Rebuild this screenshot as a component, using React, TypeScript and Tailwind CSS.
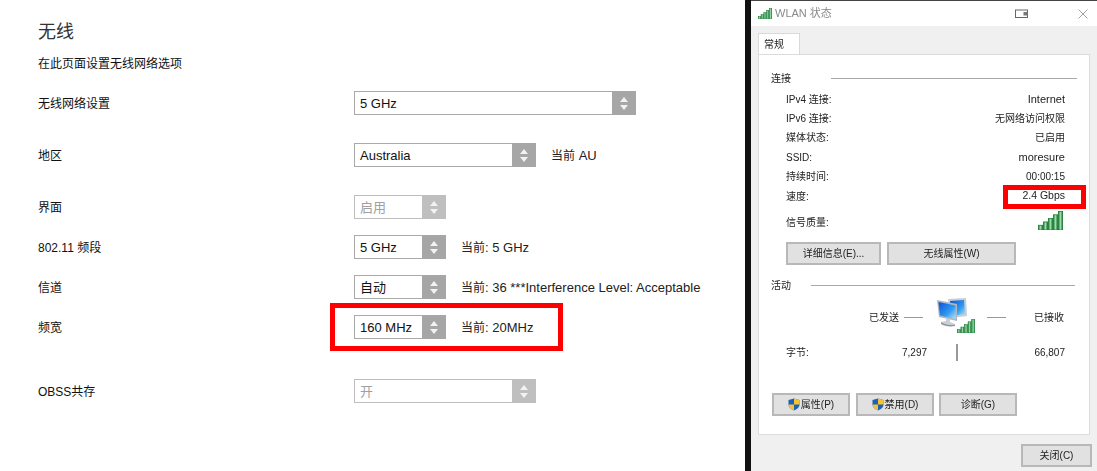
import React from 'react';

const font = { fontFamily: '"Liberation Sans", "Noto Sans CJK SC", sans-serif' };

const SelectBox = ({ value, width, disabled }: { value: string; width: string; disabled?: boolean }) => (
  <div className={`flex h-6 shrink-0 border bg-white ${width} ${disabled ? 'border-[#bdbdbd] text-[#a0a0a0]' : 'border-[#a9a9a9] text-[#111]'}`}>
    <div className="flex flex-1 items-center pl-[5px] pt-px text-[13px]">{value}</div>
    <div className={`-my-px -mr-px flex w-6 flex-col items-center justify-center gap-[3px] ${disabled ? 'bg-[#bfbfbf]' : 'bg-[#a6a6a6]'}`}>
      <div className="h-0 w-0 border-x-[4px] border-b-[5px] border-x-transparent border-b-[#f2f2f2]" />
      <div className="h-0 w-0 border-x-[4px] border-t-[5px] border-x-transparent border-t-[#f2f2f2]" />
    </div>
  </div>
);

const Row = ({ label, className, children }: { label: string; className: string; children: React.ReactNode }) => (
  <div className={`flex h-6 items-center ${className}`}>
    <div className="w-[316px] shrink-0 pt-px text-xs text-[#111]">{label}</div>
    {children}
  </div>
);

const Current = ({ cjk, rest, className }: { cjk: string; rest: string; className: string }) => (
  <div className={`whitespace-nowrap text-[#222] ${className}`}>
    <span className="text-xs">{cjk}</span>
    <span className="text-[13px]">{rest}</span>
  </div>
);

const Signal = ({ className }: { className: string }) => (
  <svg viewBox="0 0 24 20" preserveAspectRatio="none" className={className}>
    <defs>
      <linearGradient id="sig" x1="0" x2="1" y1="0" y2="0">
        <stop offset="0" stopColor="#1f8a3c" />
        <stop offset="0.5" stopColor="#9bdcab" />
        <stop offset="1" stopColor="#1f7a35" />
      </linearGradient>
    </defs>
    <rect x="0.4" y="15" width="4" height="5" fill="url(#sig)" stroke="#1d7a36" strokeWidth="0.8" />
    <rect x="5.2" y="11.5" width="4" height="8.5" fill="url(#sig)" stroke="#1d7a36" strokeWidth="0.8" />
    <rect x="10" y="8" width="4" height="12" fill="url(#sig)" stroke="#1d7a36" strokeWidth="0.8" />
    <rect x="14.8" y="4" width="4" height="16" fill="url(#sig)" stroke="#1d7a36" strokeWidth="0.8" />
    <rect x="19.6" y="0.5" width="4" height="19.5" fill="url(#sig)" stroke="#1d7a36" strokeWidth="0.8" />
  </svg>
);

const Shield = () => (
  <svg viewBox="0 0 12 13" className="h-[13px] w-3 shrink-0">
    <path d="M6 0.5 L11.5 2 V6.5 C11.5 9.5 8.5 11.5 6 12.5 C3.5 11.5 0.5 9.5 0.5 6.5 V2 Z" fill="#1f5fb8" />
    <path d="M6 0.5 L11.5 2 V6.5 H6 Z" fill="#f4c430" />
    <path d="M6 6.5 H0.5 C0.5 9.5 3.5 11.5 6 12.5 Z" fill="#f4c430" />
  </svg>
);

const Computers = () => (
  <svg viewBox="0 0 40 38" className="h-[38px] w-10">
    <defs>
      <linearGradient id="scr" x1="0" x2="1" y1="0" y2="1">
        <stop offset="0" stopColor="#0a50d8" />
        <stop offset="0.6" stopColor="#2f9bf0" />
        <stop offset="1" stopColor="#b8e2fb" />
      </linearGradient>
    </defs>
    <path d="M12 1 L30 0 L31 18 L15 20 Z" fill="#c6cdd4" />
    <path d="M14 3 L28 2 L29 16 L16 18 Z" fill="url(#scr)" />
    <path d="M1 2 L21 6 L21 23 L3 19 Z" fill="#aeb7bf" />
    <path d="M2.5 4 L19.5 7.5 L19.5 21 L4 17.5 Z" fill="url(#scr)" />
    <path d="M10 20 L14 21 L14 24 L19 26 C19 28 9 27 5 24 L10 23 Z" fill="#c9cfd4" />
    <path d="M5 24 C9 27 19 28 19 26 L19 28 C14 29 8 28 5 26 Z" fill="#8f979e" />
  </svg>
);

const WinButton = ({ children, className }: { children: React.ReactNode; className: string }) => (
  <div className={`flex h-[23px] shrink-0 items-center justify-center border-2 border-[#b8b8b8] bg-[#e1e1e1] text-[10px] text-[#222] ${className}`}>
    {children}
  </div>
);

const infoRows = [
  { label: 'IPv4 连接:', value: 'Internet', h: 'h-[19px]', size: 'text-[11px]' },
  { label: 'IPv6 连接:', value: '无网络访问权限', h: 'h-[19px]', size: '' },
  { label: '媒体状态:', value: '已启用', h: 'h-[19px]', size: '' },
  { label: 'SSID:', value: 'moresure', h: 'h-5', size: 'text-[11px]' },
  { label: '持续时间:', value: '00:00:15', h: 'h-[19px]', size: '' },
];

export default function App() {
  return (
    <div className="flex h-[471px] w-[1097px] overflow-hidden bg-white" style={font}>
      {/* router page */}
      <div className="w-[745px] shrink-0 pl-[38px] pt-[22px]">
        <h1 className="text-lg leading-5 text-[#333]">无线</h1>
        <p className="mt-[14px] text-xs leading-4 text-[#111]">在此页面设置无线网络选项</p>
        <Row label="无线网络设置" className="mt-[19px]">
          <SelectBox value="5 GHz" width="w-[282px]" />
        </Row>
        <Row label="地区" className="mt-7">
          <SelectBox value="Australia" width="w-[182px]" />
          <Current cjk="当前" rest=" AU" className="ml-[15px]" />
        </Row>
        <Row label="界面" className="mt-7">
          <SelectBox value="启用" width="w-[92px]" disabled />
        </Row>
        <Row label="802.11 频段" className="mt-4">
          <SelectBox value="5 GHz" width="w-[92px]" />
          <Current cjk="当前" rest=": 5 GHz" className="ml-[15px]" />
        </Row>
        <Row label="信道" className="mt-4">
          <SelectBox value="自动" width="w-[92px]" />
          <Current cjk="当前" rest=": 36 ***Interference Level: Acceptable" className="ml-[15px]" />
        </Row>
        <Row label="频宽" className="relative mt-4">
          <SelectBox value="160 MHz" width="w-[92px]" />
          <Current cjk="当前" rest=": 20MHz" className="ml-[15px]" />
          {/* annotation box */}
          <div className="absolute -top-3 left-[292px] h-12 w-[233px] border-[5px] border-[#ff0000]" />
        </Row>
        <Row label="OBSS共存" className="mt-10">
          <SelectBox value="开" width="w-[182px]" disabled />
        </Row>
      </div>

      <div className="w-[6px] shrink-0 bg-[#111]" />

      {/* WLAN status dialog */}
      <div className="flex flex-1 flex-col border-t border-[#444] bg-[#f0f0f0] blur-[0.3px]">
        <div className="flex h-[25px] shrink-0 items-center bg-white pl-[7px] pr-[9px]">
          <Signal className="h-[11px] w-[14px]" />
          <span className="ml-[3px] text-[11px] text-[#8a8a8a]">WLAN 状态</span>
          <svg viewBox="0 0 14 10" className="ml-[183px] h-[10px] w-[14px]">
            <rect x="0.5" y="1" width="12" height="7.5" fill="#fff" stroke="#666" />
            <rect x="8.5" y="3" width="4" height="3.5" fill="#777" />
          </svg>
          <svg viewBox="0 0 10 10" className="ml-auto h-[10px] w-[10px]">
            <path d="M0.5 0.5 L9.5 9.5 M9.5 0.5 L0.5 9.5" stroke="#888" strokeWidth="0.8" />
          </svg>
        </div>

        <div className="ml-[7px] mt-[7px] flex h-[21px] w-[42px] items-center border border-b-0 border-[#d9d9d9] bg-white pl-[5px] text-[10px] text-[#222]">
          常规
        </div>

        <div className="ml-[7px] flex h-[381px] w-[332px] flex-col border border-[#dcdcdc] bg-white pl-3 pr-3 text-[10px] text-[#222]">
          <div className="mt-[17px] flex h-3 items-center">
            <span>连接</span>
            <div className="ml-10 h-px w-[246px] bg-[#a8a8a8]" />
          </div>

          <div className="ml-[15px] mr-[12px] mt-[6px] flex flex-col">
            {infoRows.map((r) => (
              <div key={r.label} className={`flex items-center justify-between ${r.h}`}>
                <span>{r.label}</span>
                <span className={r.size}>{r.value}</span>
              </div>
            ))}
            <div className="relative flex h-5 items-center justify-between">
              <span>速度:</span>
              <span className="text-[10.5px]">2.4 Gbps</span>
              {/* annotation box */}
              <div className="absolute -right-[21px] -top-px h-6 w-[83px] border-[5px] border-[#ff0000]" />
            </div>
            <div className="mt-[7px] flex h-[19px] items-center justify-between">
              <span>信号质量:</span>
              <Signal className="mb-1 mr-[2px] h-[19px] w-[25px]" />
            </div>
          </div>

          <div className="ml-[15px] mt-[10px] flex gap-[6px]">
            <WinButton className="w-[95px]">详细信息(E)...</WinButton>
            <WinButton className="w-[129px]">无线属性(W)</WinButton>
          </div>

          <div className="mt-[14px] flex h-3 items-center">
            <span>活动</span>
            <div className="ml-5 h-px w-[264px] bg-[#a8a8a8]" />
          </div>

          <div className="ml-[98px] mt-[7px] flex h-[38px] items-center">
            <span className="w-[35px]">已发送</span>
            <div className="h-px w-[19px] bg-[#999]" />
            <div className="ml-[13px] w-10 shrink-0">
              <div className="relative">
                <Computers />
                <Signal className="absolute right-[1px] top-[21px] h-[14px] w-[18px]" />
              </div>
            </div>
            <div className="ml-[11px] h-px w-[19px] bg-[#999]" />
            <span className="ml-[28px]">已接收</span>
          </div>

          <div className="ml-[15px] mr-[12px] mt-[7px] flex h-[19px] items-center">
            <span className="w-[116px]">字节:</span>
            <span className="w-[25px] whitespace-nowrap text-right">7,297</span>
            <div className="ml-[29px] h-[17px] w-[2px] bg-[#999]" />
            <span className="ml-auto">66,807</span>
          </div>

          <div className="ml-px mt-[31px] flex gap-[6px]">
            <WinButton className="w-[78px] gap-px">
              <Shield />
              属性(P)
            </WinButton>
            <WinButton className="w-[78px] gap-px">
              <Shield />
              禁用(D)
            </WinButton>
            <WinButton className="-ml-px w-[78px]">诊断(G)</WinButton>
          </div>
        </div>

        <div className="mr-[5px] mt-[9px] flex justify-end">
          <WinButton className="w-[71px]">关闭(C)</WinButton>
        </div>
      </div>
    </div>
  );
}
